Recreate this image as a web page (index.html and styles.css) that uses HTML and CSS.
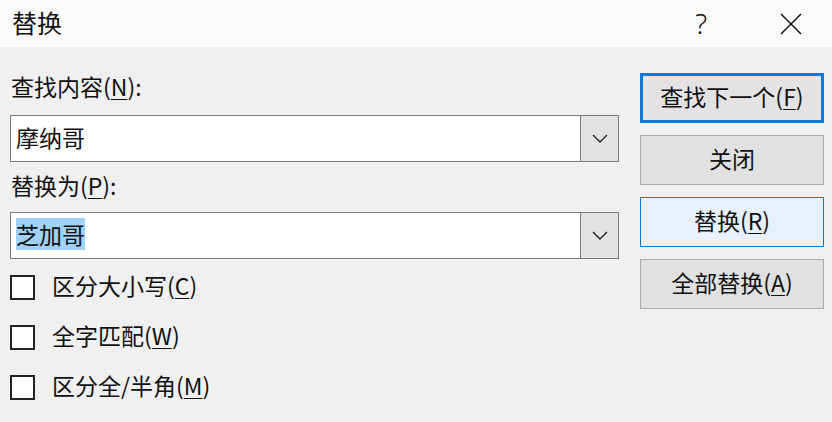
FILE: index.html
```html
<!DOCTYPE html>
<html lang="zh-CN">
<head>
  <meta charset="UTF-8" />
  <title>替换</title>
  <link rel="stylesheet" href="styles.css">
</head>
<body>
  <div class="dialog">
    <div class="titlebar">
      <span class="title">替换</span>
      <span class="help">?</span>
      <span class="close">
        <svg width="22" height="22" viewBox="0 0 22 22">
          <line x1="1" y1="1" x2="21" y2="21" stroke="#111" stroke-width="1.4"/>
          <line x1="21" y1="1" x2="1" y2="21" stroke="#111" stroke-width="1.4"/>
        </svg>
      </span>
    </div>

    <div class="content">
      <div class="fields">
        <div class="field-label">查找内容(<u>N</u>):</div>
        <div class="combo">
          <div class="combo-text">摩纳哥</div>
          <div class="combo-drop">
            <svg width="16" height="9" viewBox="0 0 16 9">
              <polyline points="1,1 8,8 15,1" fill="none" stroke="#222" stroke-width="1.4"/>
            </svg>
          </div>
        </div>

        <div class="field-label second">替换为(<u>P</u>):</div>
        <div class="combo">
          <div class="combo-text"><span class="selected">芝加哥</span></div>
          <div class="combo-drop">
            <svg width="16" height="9" viewBox="0 0 16 9">
              <polyline points="1,1 8,8 15,1" fill="none" stroke="#222" stroke-width="1.4"/>
            </svg>
          </div>
        </div>

        <div class="options">
          <div class="option"><span class="checkbox"></span><span class="option-text">区分大小写(<u>C</u>)</span></div>
          <div class="option"><span class="checkbox"></span><span class="option-text">全字匹配(<u>W</u>)</span></div>
          <div class="option"><span class="checkbox"></span><span class="option-text">区分全/半角(<u>M</u>)</span></div>
        </div>
      </div>

      <div class="buttons">
        <button class="btn btn-default">查找下一个(<u>F</u>)</button>
        <button class="btn">关闭</button>
        <button class="btn btn-hover">替换(<u>R</u>)</button>
        <button class="btn">全部替换(<u>A</u>)</button>
      </div>
    </div>
  </div>
</body>
</html>
```

FILE: styles.css
```css
body {
  margin: 0;
  font-family: 'Noto Sans CJK SC', 'Microsoft YaHei', sans-serif;
  font-size: 23px;
  color: #111;
  background-color: #f0f0f1;
}
.dialog {
  width: 832px;
  height: 422px;
  overflow: hidden;
}
.titlebar {
  height: 47px;
  background-color: #fbfbfc;
  display: flex;
  align-items: center;
  padding-left: 12px;
}
.title {
  font-size: 25px;
  flex: 1;
  line-height: 30px;
  padding-bottom: 3px;
}
.help {
  font-family: 'Noto Sans', sans-serif;
  font-weight: 300;
  font-size: 28px;
  line-height: 30px;
  margin-right: 73px;
  padding-bottom: 2px;
}
.close {
  display: flex;
  margin-right: 30px;
}
.content {
  display: flex;
  gap: 21px;
  padding: 0 8px 0 10px;
}
.fields {
  width: 609px;
  padding-top: 27px;
}
.field-label {
  line-height: 25px;
  height: 30px;
  margin-bottom: 11px;
  padding-left: 1px;
}
.field-label.second {
  margin-top: 11px;
  margin-bottom: 9px;
}
u {
  text-underline-offset: 3px;
  text-decoration-thickness: 1px;
}
.combo {
  display: flex;
  height: 47px;
  box-sizing: border-box;
  border: 1px solid #7a7a7a;
  background-color: #fff;
}
.combo-text {
  flex: 1;
  display: flex;
  align-items: center;
  padding-left: 5px;
  padding-bottom: 4px;
}
.selected {
  background-color: #9fd2f6;
  line-height: 32px;
}
.combo-drop {
  width: 37px;
  border-left: 1px solid #7a7a7a;
  background-color: #e3e3e3;
  display: flex;
  align-items: center;
  justify-content: center;
}
.options {
  margin-top: 3px;
}
.option {
  display: flex;
  align-items: center;
  height: 50px;
}
.option-text {
  padding-bottom: 5px;
}
.checkbox {
  width: 25px;
  height: 25px;
  box-sizing: border-box;
  border: 2px solid #222;
  background-color: #fff;
  margin-right: 17px;
}
.buttons {
  width: 184px;
  padding-top: 26px;
  display: flex;
  flex-direction: column;
  gap: 12px;
}
.btn {
  height: 50px;
  box-sizing: border-box;
  font-family: inherit;
  font-size: 23px;
  color: #111;
  background-color: #e1e1e1;
  border: 1px solid #adadad;
  padding: 0 0 4px;
}
.btn-default {
  border: 3px solid #0a78d6;
  background-color: #e4e2e2;
}
.btn-hover {
  border: 1px solid #0a78d6;
  background-color: #e6f1fb;
}
```
